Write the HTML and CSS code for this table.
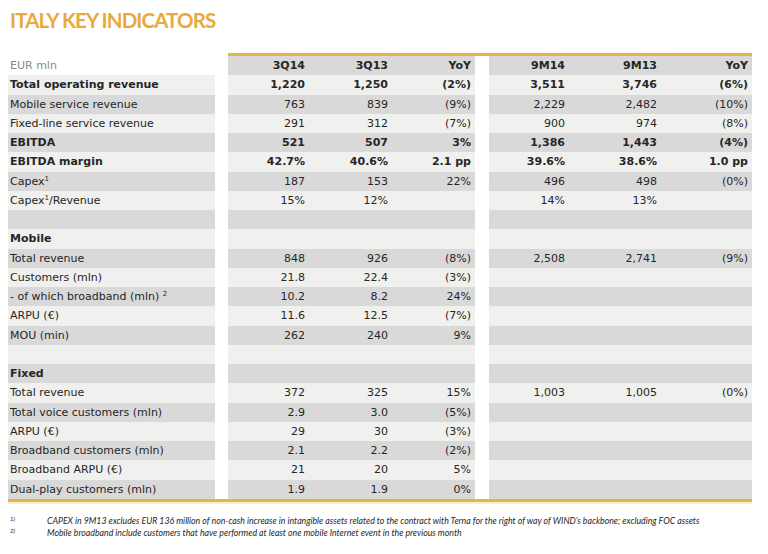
FILE: index.html
```html
<!DOCTYPE html>
<html lang="en">
<head>
<meta charset="utf-8">
<title>Italy Key Indicators</title>
<link rel="stylesheet" href="styles.css">
</head>
<body>
<h1 class="title">ITALY KEY INDICATORS</h1>
<div class="table">
  <div class="row topline"><div class="blank"></div><div class="blank"></div><div class="gold"></div></div>
  <div class="row head g"><div class="lbl none muted">EUR mln</div><div class="gap"></div><div class="c b">3Q14</div><div class="c b">3Q13</div><div class="c b">YoY</div><div class="gap"></div><div class="c b">9M14</div><div class="c b">9M13</div><div class="c b">YoY</div></div>
  <div class="row l b"><div class="lbl">Total operating revenue</div><div class="gap"></div><div class="c">1,220</div><div class="c">1,250</div><div class="c">(2%)</div><div class="gap"></div><div class="c">3,511</div><div class="c">3,746</div><div class="c">(6%)</div></div>
  <div class="row g"><div class="lbl">Mobile service revenue</div><div class="gap"></div><div class="c">763</div><div class="c">839</div><div class="c">(9%)</div><div class="gap"></div><div class="c">2,229</div><div class="c">2,482</div><div class="c">(10%)</div></div>
  <div class="row l"><div class="lbl">Fixed-line service revenue</div><div class="gap"></div><div class="c">291</div><div class="c">312</div><div class="c">(7%)</div><div class="gap"></div><div class="c">900</div><div class="c">974</div><div class="c">(8%)</div></div>
  <div class="row g b"><div class="lbl">EBITDA</div><div class="gap"></div><div class="c">521</div><div class="c">507</div><div class="c">3%</div><div class="gap"></div><div class="c">1,386</div><div class="c">1,443</div><div class="c">(4%)</div></div>
  <div class="row l b"><div class="lbl">EBITDA margin</div><div class="gap"></div><div class="c">42.7%</div><div class="c">40.6%</div><div class="c">2.1 pp</div><div class="gap"></div><div class="c">39.6%</div><div class="c">38.6%</div><div class="c">1.0 pp</div></div>
  <div class="row g"><div class="lbl">Capex<sup>1</sup></div><div class="gap"></div><div class="c">187</div><div class="c">153</div><div class="c">22%</div><div class="gap"></div><div class="c">496</div><div class="c">498</div><div class="c">(0%)</div></div>
  <div class="row l"><div class="lbl">Capex<sup>1</sup>/Revenue</div><div class="gap"></div><div class="c">15%</div><div class="c">12%</div><div class="c"></div><div class="gap"></div><div class="c">14%</div><div class="c">13%</div><div class="c"></div></div>
  <div class="row g"><div class="lbl"></div><div class="gap"></div><div class="c"></div><div class="c"></div><div class="c"></div><div class="gap"></div><div class="c"></div><div class="c"></div><div class="c"></div></div>
  <div class="row l"><div class="lbl b">Mobile</div><div class="gap"></div><div class="c"></div><div class="c"></div><div class="c"></div><div class="gap"></div><div class="c"></div><div class="c"></div><div class="c"></div></div>
  <div class="row g"><div class="lbl">Total revenue</div><div class="gap"></div><div class="c">848</div><div class="c">926</div><div class="c">(8%)</div><div class="gap"></div><div class="c">2,508</div><div class="c">2,741</div><div class="c">(9%)</div></div>
  <div class="row l"><div class="lbl">Customers (mln)</div><div class="gap"></div><div class="c">21.8</div><div class="c">22.4</div><div class="c">(3%)</div><div class="gap"></div><div class="c"></div><div class="c"></div><div class="c"></div></div>
  <div class="row g"><div class="lbl">- of which broadband (mln) <sup>2</sup></div><div class="gap"></div><div class="c">10.2</div><div class="c">8.2</div><div class="c">24%</div><div class="gap"></div><div class="c"></div><div class="c"></div><div class="c"></div></div>
  <div class="row l"><div class="lbl">ARPU (€)</div><div class="gap"></div><div class="c">11.6</div><div class="c">12.5</div><div class="c">(7%)</div><div class="gap"></div><div class="c"></div><div class="c"></div><div class="c"></div></div>
  <div class="row g"><div class="lbl">MOU (min)</div><div class="gap"></div><div class="c">262</div><div class="c">240</div><div class="c">9%</div><div class="gap"></div><div class="c"></div><div class="c"></div><div class="c"></div></div>
  <div class="row l"><div class="lbl"></div><div class="gap"></div><div class="c"></div><div class="c"></div><div class="c"></div><div class="gap"></div><div class="c"></div><div class="c"></div><div class="c"></div></div>
  <div class="row g"><div class="lbl b">Fixed</div><div class="gap"></div><div class="c"></div><div class="c"></div><div class="c"></div><div class="gap"></div><div class="c"></div><div class="c"></div><div class="c"></div></div>
  <div class="row l"><div class="lbl">Total revenue</div><div class="gap"></div><div class="c">372</div><div class="c">325</div><div class="c">15%</div><div class="gap"></div><div class="c">1,003</div><div class="c">1,005</div><div class="c">(0%)</div></div>
  <div class="row g"><div class="lbl">Total voice customers (mln)</div><div class="gap"></div><div class="c">2.9</div><div class="c">3.0</div><div class="c">(5%)</div><div class="gap"></div><div class="c"></div><div class="c"></div><div class="c"></div></div>
  <div class="row l"><div class="lbl">ARPU (€)</div><div class="gap"></div><div class="c">29</div><div class="c">30</div><div class="c">(3%)</div><div class="gap"></div><div class="c"></div><div class="c"></div><div class="c"></div></div>
  <div class="row g"><div class="lbl">Broadband customers (mln)</div><div class="gap"></div><div class="c">2.1</div><div class="c">2.2</div><div class="c">(2%)</div><div class="gap"></div><div class="c"></div><div class="c"></div><div class="c"></div></div>
  <div class="row l"><div class="lbl">Broadband ARPU (€)</div><div class="gap"></div><div class="c">21</div><div class="c">20</div><div class="c">5%</div><div class="gap"></div><div class="c"></div><div class="c"></div><div class="c"></div></div>
  <div class="row g"><div class="lbl">Dual-play customers (mln)</div><div class="gap"></div><div class="c">1.9</div><div class="c">1.9</div><div class="c">0%</div><div class="gap"></div><div class="c"></div><div class="c"></div><div class="c"></div></div>
  <div class="bottomline"></div>
</div>
<div class="notes">
  <div class="note"><span class="mark">1)</span><span>CAPEX in 9M13 excludes EUR 136 million of non-cash increase in intangible assets related to the contract with Terna for the right of way of WIND’s backbone; excluding FOC assets</span></div>
  <div class="note"><span class="mark">2)</span><span>Mobile broadband include customers that have performed at least one mobile Internet event in the previous month</span></div>
</div>
</body>
</html>
```

FILE: styles.css
```css
html, body {
  margin: 0;
  padding: 0;
  background: #ffffff;
}
body {
  padding: 8px 8px 0 8px;
  font-family: "DejaVu Sans", Verdana, sans-serif;
  color: #262626;
}
.title {
  margin: 0;
  padding: 0 0 0 2px;
  font-family: "Lato", "Open Sans", sans-serif;
  font-weight: 700;
  font-size: 20.5px;
  line-height: 25px;
  letter-spacing: -0.9px;
  color: #e9a93c;
  height: 45px;
}
.table {
  width: 744px;
}
.row {
  display: grid;
  grid-template-columns: 207px 13px 81px 83px 83px 14px 80px 92px 91px;
  height: 19.25px;
  font-size: 11px;
  line-height: 19.25px;
}
.row.topline {
  grid-template-columns: 207px 13px 524px;
  height: 3px;
}
.gold {
  background: #e6b54a;
}
.row.g > .lbl, .row.g > .c { background: #d9d9d9; }
.row.l > .lbl, .row.l > .c { background: #f0f0ee; }
.row > .lbl.none { background: transparent; }
.row.head > .c { background: #d9d9d9; }
.lbl {
  padding-left: 2px;
  white-space: nowrap;
}
.c {
  text-align: right;
  padding-right: 4px;
  white-space: nowrap;
}
.b, .row.b .lbl, .row.b .c { font-weight: 700; }
.muted { color: #8a8a8a; }
.gap, .blank { background: transparent; }
sup {
  font-size: 7px;
  line-height: 0;
  vertical-align: 4px;
}
.bottomline {
  height: 3px;
  background: #e6b54a;
  border-bottom: 2px solid #faeecc;
}
.notes {
  margin-top: 11px;
  font-family: "Lato", "Open Sans", sans-serif;
  font-style: italic;
  font-size: 8.75px;
  color: #262626;
}
.note {
  display: flex;
  height: 12.5px;
  line-height: 12.5px;
}
.mark {
  width: 37px;
  padding-left: 2px;
  font-size: 6px;
  line-height: 8px;
}
```
